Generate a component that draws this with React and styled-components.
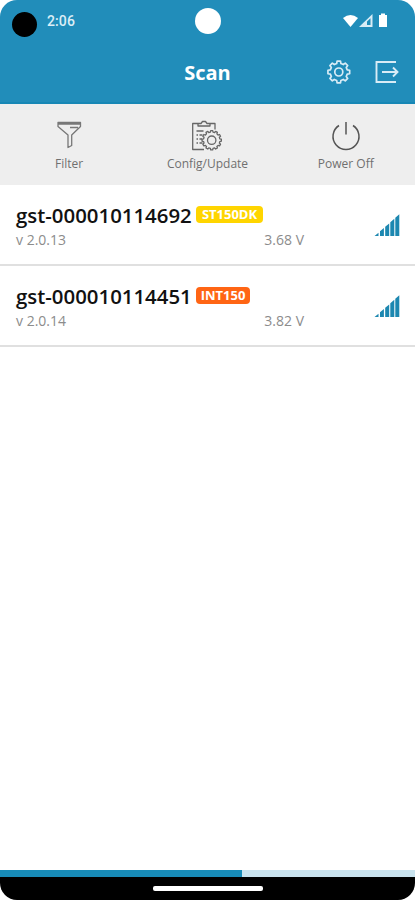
import React from "react";
import styled, { createGlobalStyle } from "styled-components";

const GlobalStyle = createGlobalStyle`
  * { box-sizing: border-box; }
  body { margin: 0; background: #fff; font-family: "Open Sans", "Noto Sans", sans-serif; }
`;

const Screen = styled.div`
  width: 415px;
  height: 900px;
  display: flex;
  flex-direction: column;
  overflow: hidden;
  border-radius: 17px;
  background: #fff;
`;

const Header = styled.header`
  height: 104px;
  flex: none;
  background: #218dba;
  border-bottom: 2px solid #1787b5;
  color: #fff;
`;

const StatusBar = styled.div`
  height: 42px;
  display: grid;
  grid-template-columns: 1fr 26px 1fr;
  align-items: center;
  padding-left: 12px;
  padding-right: 26px;
`;

const StatusLeft = styled.div`
  display: flex;
  align-items: center;
  gap: 10px;
`;

const CameraHole = styled.span`
  width: 25px;
  height: 25px;
  margin-top: 7px;
  border-radius: 50%;
  background: #000;
`;

const Clock = styled.span`
  font: 500 14px/20px Roboto, sans-serif;
  color: #dceef7;
  letter-spacing: 0.1px;
`;

const CenterDot = styled.span`
  width: 26px;
  height: 26px;
  margin-left: 7.5px;
  border-radius: 50%;
  background: #fff;
`;

const StatusIcons = styled.svg`
  justify-self: end;
  width: 46px;
  height: 16px;
  margin-top: -1px;
`;

const TitleBar = styled.div`
  height: 60px;
  display: grid;
  grid-template-columns: 1fr auto 1fr;
  align-items: center;
  padding: 0 15px;
`;

const Title = styled.h1`
  grid-column: 2;
  margin: 0;
  padding-top: 1px;
  font-size: 20px;
  line-height: 28px;
  font-weight: 700;
`;

const HeaderActions = styled.div`
  display: flex;
  justify-content: flex-end;
  gap: 23px;
`;

const IconButton = styled.button`
  display: flex;
  padding: 0;
  border: 0;
  background: none;
  color: #d8ecf6;
`;

const Toolbar = styled.nav`
  height: 81px;
  flex: none;
  display: grid;
  grid-template-columns: repeat(3, 1fr);
  background: #eee;
`;

const Tool = styled.button`
  display: flex;
  flex-direction: column;
  align-items: center;
  padding: 14px 0 0;
  border: 0;
  background: none;
  color: #707070;
  font: 400 12px/18px "Open Sans", sans-serif;
  svg { margin-bottom: 1px; }
`;

const DeviceList = styled.main`
  flex: 1;
`;

const Device = styled.article`
  height: 81px;
  display: flex;
  align-items: center;
  justify-content: space-between;
  padding: 3px 15px 0 16px;
  border-bottom: 2px solid #e0e0e0;
`;

const DeviceInfo = styled.div`
  width: 288px;
  padding-top: 2px;
`;

const NameLine = styled.div`
  display: flex;
  align-items: center;
  height: 25px;
`;

const Name = styled.h2`
  width: 180px;
  margin: 0;
  font-size: 20.4px;
  line-height: 25px;
  font-weight: 600;
  color: #111;
  white-space: nowrap;
`;

const Badge = styled.span`
  height: 17px;
  width: ${(p) => p.$width};
  margin-top: -2px;
  border-radius: 4px;
  background: ${(p) => p.$color};
  color: #fff;
  font-size: 13px;
  line-height: 17px;
  font-weight: 700;
  text-align: center;
`;

const Details = styled.div`
  display: flex;
  justify-content: space-between;
  font-size: 14px;
  line-height: 23px;
  color: #8c8c8c;
`;

const Progress = styled.div`
  height: 7px;
  flex: none;
  background: #c9e3ee;
`;

const ProgressFill = styled.div`
  width: 242px;
  height: 100%;
  background: #178bb8;
`;

const NavigationBar = styled.footer`
  height: 23px;
  flex: none;
  display: flex;
  justify-content: center;
  padding-top: 9px;
  background: #000;
`;

const HomeHandle = styled.span`
  width: 110px;
  height: 5px;
  border-radius: 2px;
  background: #fff;
`;

function gearPath(cx, cy, outer, inner, teeth) {
  const step = (Math.PI * 2) / teeth;
  const points = [];
  for (let i = 0; i < teeth; i += 1) {
    const a = i * step - Math.PI / 2;
    [[-0.31, inner], [-0.2, outer], [0.2, outer], [0.31, inner]].forEach(([t, r]) => {
      points.push(`${(cx + r * Math.cos(a + t * step)).toFixed(2)} ${(cy + r * Math.sin(a + t * step)).toFixed(2)}`);
    });
  }
  return `M${points.join("L")}Z`;
}

const SettingsIcon = () => (
  <svg width="25" height="24" viewBox="0 0 25 24" fill="none" stroke="currentColor" strokeWidth="1.7" strokeLinejoin="round">
    <path d={gearPath(12.8, 12, 11, 8.7, 8)} />
    <circle cx="12.8" cy="12" r="4" />
  </svg>
);

const ExitIcon = () => (
  <svg width="26" height="24" viewBox="0 0 26 24" fill="none" stroke="currentColor" strokeWidth="1.9">
    <path d="M22 2H2.5v20H22M8 12h15M19 7.5l4.5 4.5-4.5 4.5" />
  </svg>
);

const FilterIcon = () => (
  <svg width="36" height="36" viewBox="0 0 36 36" fill="none" stroke="#777" strokeWidth="1.3" strokeLinejoin="round">
    <path d="M7 4.5h22.500v4L20.700 17v10.500l-3.700 2V17L7 8.500zM7.500 6h21.500M19 9.500h8" />
  </svg>
);

const ConfigIcon = () => (
  <svg width="36" height="36" viewBox="0 0 36 36" fill="none" stroke="#666" strokeWidth="1.3" strokeLinejoin="round">
    <path d="M9 5.500H3.700v26h11.300M21 5.500h5v6M9 8V5.500h3L13.500 3.500h3L18 5.500h3V8z" />
    <path d="M7.500 13h7M7.500 17h1.500M10.500 17h3M7.500 21h1.500M10.500 21h2.500M7.500 25h1.500M10.500 25h3" />
    <path d={gearPath(22.7, 22.2, 9.7, 8.2, 12)} />
    <circle cx="22.7" cy="22.2" r="4.2" />
  </svg>
);

const PowerIcon = () => (
  <svg width="36" height="36" viewBox="0 0 36 36" fill="none" stroke="#555" strokeWidth="1.500">
    <path d="M18 4v12.500M11 7.500A13 13 0 1 0 25 7.500" />
  </svg>
);

const SignalIcon = () => (
  <svg width="26" height="24" viewBox="0 0 26 24" fill="#1c87b0">
    <path d="M.5 22l4-3.200V22zM6 17.300l3.900-3.300v8H6zM11.200 12.800l4-3.400V22h-4zM16.300 8.200l4-3.400V22h-4zM21.300 3.800L25.300.3V22h-4z" />
  </svg>
);

const devices = [
  { name: "gst-000010114692", model: "ST150DK", color: "#ffd500", width: "67px", version: "v 2.0.13", voltage: "3.68 V" },
  { name: "gst-000010114451", model: "INT150", color: "#ff6514", width: "54px", version: "v 2.0.14", voltage: "3.82 V" },
];

export default function App() {
  return (
    <>
      <GlobalStyle />
      <Screen>
        <Header>
          <StatusBar>
            <StatusLeft><CameraHole /><Clock>2:06</Clock></StatusLeft>
            <CenterDot />
            <StatusIcons viewBox="0 0 46 16">
              <path d="M0 5Q7.5-1 15 5L7.5 14z" fill="#fff" />
              <path d="M16 14L29.5 1v13z" fill="#d8ecf6" />
              <path d="M24 8.5l3.5-3.3V12H24z" fill="#218dba" />
              <path d="M36 2h2V.5h4V2h2v12h-8z" fill="#fff" />
            </StatusIcons>
          </StatusBar>
          <TitleBar>
            <Title>Scan</Title>
            <HeaderActions>
              <IconButton aria-label="Settings"><SettingsIcon /></IconButton>
              <IconButton aria-label="Exit"><ExitIcon /></IconButton>
            </HeaderActions>
          </TitleBar>
        </Header>
        <Toolbar>
          <Tool><FilterIcon />Filter</Tool>
          <Tool><ConfigIcon />Config/Update</Tool>
          <Tool><PowerIcon />Power Off</Tool>
        </Toolbar>
        <DeviceList>
          {devices.map((d) => (
            <Device key={d.name}>
              <DeviceInfo>
                <NameLine><Name>{d.name}</Name><Badge $color={d.color} $width={d.width}>{d.model}</Badge></NameLine>
                <Details><span>{d.version}</span><span>{d.voltage}</span></Details>
              </DeviceInfo>
              <SignalIcon />
            </Device>
          ))}
        </DeviceList>
        <Progress><ProgressFill /></Progress>
        <NavigationBar><HomeHandle /></NavigationBar>
      </Screen>
    </>
  );
}
